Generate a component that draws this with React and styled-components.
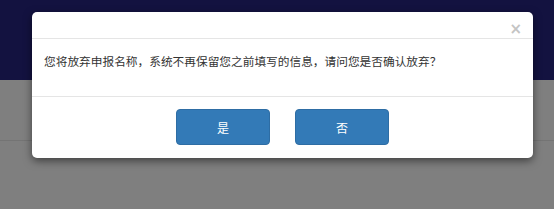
import React from "react";
import styled, { createGlobalStyle } from "styled-components";

const GlobalStyle = createGlobalStyle`
	html, body {
		margin: 0;
		padding: 0;
		background: #7f7f7f;
		font-family: "Liberation Sans", "Noto Sans CJK SC", sans-serif;
	}
`;

const Page = styled.div`
	position: relative;
	width: 554px;
	height: 209px;
	overflow: hidden;
	background: #7f7f7f;
`;

const TopBar = styled.header`
	height: 80px;
	background: #131240;
`;

const Strip = styled.div`
	height: 60px;
	border-bottom: 1px solid #747474;
`;

const Modal = styled.div`
	position: absolute;
	left: 32px;
	top: 12px;
	width: 501px;
	height: 146px;
	display: flex;
	flex-direction: column;
	background: #fff;
	border-radius: 5px;
	box-shadow: 0 3px 9px rgba(0, 0, 0, 0.5);
`;

const ModalHeader = styled.div`
	height: 26px;
	flex-shrink: 0;
	display: flex;
	justify-content: flex-end;
	align-items: flex-end;
	padding: 0 11px 0 0;
	border-bottom: 1px solid #e5e5e5;
`;

const Close = styled.span`
	font-family: "DejaVu Sans", sans-serif;
	font-size: 15px;
	font-weight: 700;
	line-height: 1;
	color: #c4c4c4;
	margin-bottom: 1px;
`;

const ModalBody = styled.div`
	height: 58px;
	flex-shrink: 0;
	box-sizing: border-box;
	padding: 14px 12px 0;
	border-bottom: 1px solid #e5e5e5;
	font-family: "Noto Sans CJK SC", sans-serif;
	font-size: 11.7px;
	line-height: 16px;
	color: #333;
`;

const ModalFooter = styled.div`
	flex: 1;
	display: flex;
	justify-content: center;
	align-items: flex-start;
	gap: 25px;
	padding-top: 12px;
`;

const Button = styled.button`
	width: 94px;
	height: 36px;
	border: 1px solid #2e6da4;
	border-radius: 4px;
	background: #337ab7;
	color: #fff;
	font-family: "Noto Sans CJK SC", sans-serif;
	font-size: 12px;
	cursor: pointer;
`;

export default function App() {
	return (
		<>
			<GlobalStyle />
			<Page>
				<TopBar />
				<Strip />
				<Modal>
					<ModalHeader>
						<Close>×</Close>
					</ModalHeader>
					<ModalBody>您将放弃申报名称，系统不再保留您之前填写的信息，请问您是否确认放弃？</ModalBody>
					<ModalFooter>
						<Button>是</Button>
						<Button>否</Button>
					</ModalFooter>
				</Modal>
			</Page>
		</>
	);
}
